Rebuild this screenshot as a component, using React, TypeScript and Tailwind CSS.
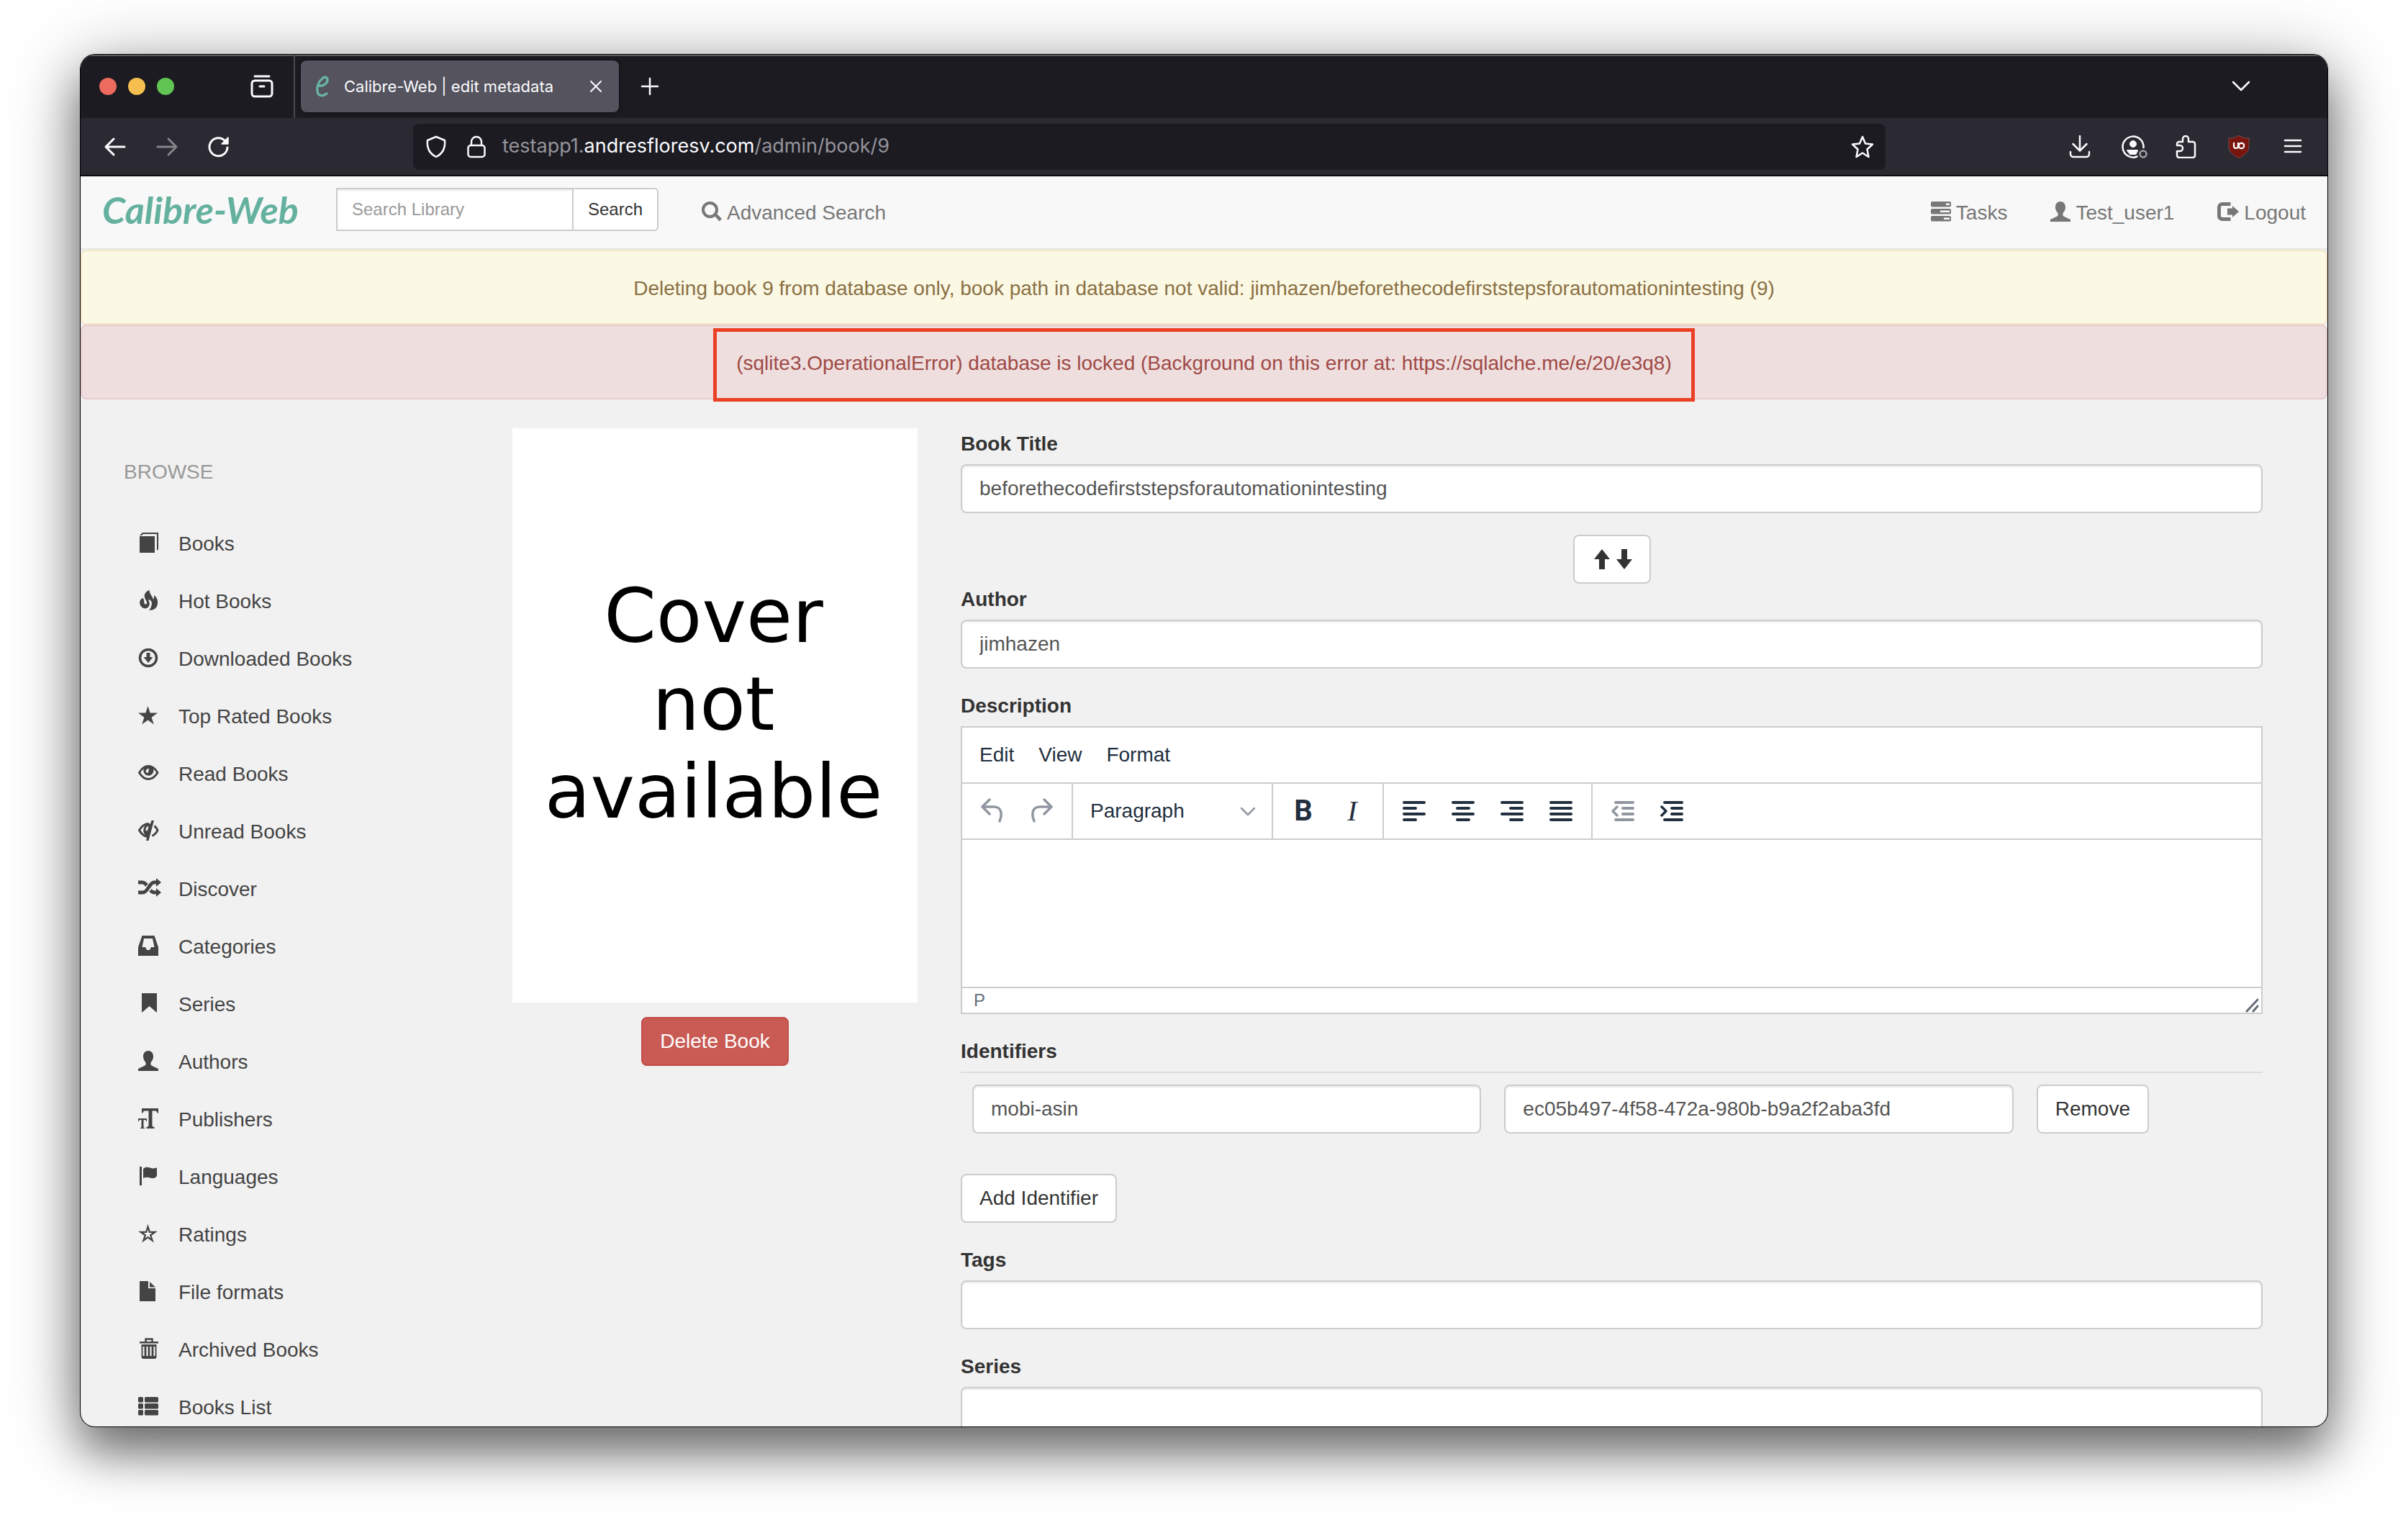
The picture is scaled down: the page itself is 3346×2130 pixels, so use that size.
import React from "react";

type IconProps = { children: React.ReactNode; className?: string; box?: string };

function Glyph({ children, className = "size-7", box = "0 0 28 28" }: IconProps) {
  return (
    <svg viewBox={box} className={className} fill="currentColor" aria-hidden="true">
      {children}
    </svg>
  );
}

function Line({ children, className = "size-8", box = "0 0 32 32" }: IconProps) {
  return (
    <svg
      viewBox={box}
      className={className}
      fill="none"
      stroke="currentColor"
      strokeWidth="2.5"
      strokeLinecap="round"
      strokeLinejoin="round"
      aria-hidden="true"
    >
      {children}
    </svg>
  );
}

const USER =
  "M14 0c-4 0-7 3-7 7.500 0 4.500 2 6.500 3.500 9 .5 2 0 3.500-2 4.500L0 25v3h28v-3l-8.500-4c-2-1-2.500-2.500-2-4.500 1.500-2.500 3.500-4.500 3.500-9C21 3 18 0 14 0z";
const STAR = "M13.500 1l3.100 9.600H27l-8.400 6.100 3.200 9.800-8.300-6-8.300 6 3.200-9.800L0 10.600h10.400z";

const menu: { label: string; icon: React.ReactNode }[] = [
  {
    label: "Books",
    icon: (
      <>
        <path d="M2 5h21v23H2z" />
        <path d="M2 4 6 0h22v23l-2 2V2H7L5 4z" />
      </>
    ),
  },
  {
    label: "Hot Books",
    icon: (
      <path d="M15.500 0C10 2 8 6 9 10c1 4 3.500 5 3 8-.5 2-3 2-3.500 0-.6-2 .5-4-2-7C3 12 1.500 16 2.500 19.500 4 25 10 27 13.500 24c3.500-3 2.500-7 .5-11 3 0 6 3 4.500 8-.5 3-2 5-3.500 7 7 0 11-3 12-9 .8-6-2-10-5-12 .2 3 0 5-1 6-1-5-5-7-5.500-13z" />
    ),
  },
  {
    label: "Downloaded Books",
    icon: (
      <>
        <circle cx="14" cy="14" r="11.500" fill="none" stroke="currentColor" strokeWidth="3.500" />
        <path d="M11.500 7h5v6h4L14 21l-6.500-8h4z" />
      </>
    ),
  },
  { label: "Top Rated Books", icon: <path d={STAR} /> },
  {
    label: "Read Books",
    icon: (
      <>
        <path
          d="M1.500 13.500C5 7.500 9 4.500 14 4.500s9.500 3 13 9c-3.500 6-8 9-13 9s-9-3-12.500-9z"
          fill="none"
          stroke="currentColor"
          strokeWidth="2.800"
        />
        <path d="M7.500 12a7 7 0 0 1 2-6.500h9.500a7 7 0 1 1-11.500 6.500zm3-.5c.5 2 2.500 3 3.500 2 1-1 0-2 .5-3.500.3-1 1-1.500.5-2-2-.5-4.500 1.500-4.500 3.500z" fillRule="evenodd" />
      </>
    ),
  },
  {
    label: "Unread Books",
    icon: (
      <>
        <path
          d="M15 4.500c-5 0-10 3-13.500 9 3 5.500 7 8.500 11.500 9M22.500 7.500c2 1.500 3.500 3.500 4.500 6-1.500 3.500-4 6-7.500 8"
          fill="none"
          stroke="currentColor"
          strokeWidth="3"
        />
        <path d="M18.500 0H22l-7.500 28H11l1.500-6c-4-2-6-6-5-10 .5-3 2-5 4-7l5.500-.5z" />
        <path d="M10.500 12c.5-2.500 2-4 4-4l-1.500 6c-1.500 1-2.500 0-2.500-2z" fill="#f1f1f1" />
      </>
    ),
  },
  {
    label: "Discover",
    icon: (
      <>
        <path
          d="M0 6h6c3 0 4 2 6 4M0 20h7c6 0 9-14 15-14h4M17 17c2 2 3 3 5 3h4"
          fill="none"
          stroke="currentColor"
          strokeWidth="5"
        />
        <path d="M25 0l7 6-7 6zM25 14l7 6-7 6z" />
      </>
    ),
  },
  {
    label: "Categories",
    icon: (
      <path
        d="M5.500 0h17L28 16v12H0V16zM8 4 5.500 16H10l2 4h4l2-4h4.500L20 4z"
        fillRule="evenodd"
      />
    ),
  },
  { label: "Series", icon: <path d="M5 0h21v27L15.500 18 5 27z" /> },
  { label: "Authors", icon: <path d={USER} /> },
  {
    label: "Publishers",
    icon: (
      <path d="M5 0h23v6.500h-1.500C26 4 25 3.500 23 3.500h-3.500v20c0 1.500 1 2.500 3 2.500v2H11.500v-2c2 0 3-1 3-2.500v-20H10c-2 0-3 .5-3.500 3H5zM0 14h12v4h-1c0-1.500-.5-2-2-2H7.500v9.500c0 1 .5 1.500 1.500 1.500v1H3v-1c1 0 1.500-.5 1.500-1.500V16H3c-1.500 0-2 .5-2 2H0z" />
    ),
  },
  {
    label: "Languages",
    icon: (
      <path d="M2 1h3v26H2zM7 4c3-3 6-2.500 9.500-1.500S23 4 26 2v12c-3 3.500-6 3.500-9.500 2.500S10 15.500 7 17z" />
    ),
  },
  {
    label: "Ratings",
    icon: (
      <path
        d="M13.500 4.500l2.300 7.300h7.600l-6.200 4.500 2.400 7.200-6.100-4.400-6.100 4.400 2.400-7.200-6.200-4.500h7.600z"
        fill="none"
        stroke="currentColor"
        strokeWidth="2.300"
      />
    ),
  },
  { label: "File formats", icon: <path d="M2 0h12v10h10v18H2zM16 1l8 7.500h-8z" /> },
  {
    label: "Archived Books",
    icon: (
      <>
        <path d="M2 4h26v2.500H2zM4.500 8h21v17a3 3 0 0 1-3 3h-15a3 3 0 0 1-3-3z" />
        <path d="M10.500 4V.5h9V4" fill="none" stroke="currentColor" strokeWidth="2.500" />
        <path d="M7.500 11v13M12.500 11v13M17.500 11v13M22.500 11v13" stroke="#f1f1f1" strokeWidth="2.200" />
      </>
    ),
  },
  {
    label: "Books List",
    icon: (
      <>
        {[1, 10, 19].map((y) => (
          <React.Fragment key={y}>
            <rect x="0" y={y} width="7" height="7.500" rx="1.500" />
            <rect x="9" y={y} width="19" height="7.500" rx="1.500" />
          </React.Fragment>
        ))}
      </>
    ),
  },
];

const inputClass =
  "h-[68px] w-full min-w-0 rounded-lg border-2 border-[#ccc] bg-white px-6 text-[28px] text-[#555] shadow-[inset_0_2px_2px_rgba(0,0,0,0.075)]";
const buttonClass =
  "h-[68px] shrink-0 rounded-lg border-2 border-[#ccc] bg-white px-6 text-[28px] text-[#333]";
const labelClass = "block text-[28px] leading-11 font-bold text-[#333]";

function Field({ id, label, value = "" }: { id: string; label: string; value?: string }) {
  return (
    <div className="flex flex-col gap-[6px]">
      <label htmlFor={id} className={labelClass}>
        {label}
      </label>
      <input id={id} type="text" defaultValue={value} className={inputClass} />
    </div>
  );
}

function TitleBar() {
  return (
    <div className="flex h-[88px] shrink-0 items-center bg-[#1c1b22] text-[#fbfbfe] shadow-[inset_0_2px_0_#5c5c5e]">
      <div className="flex h-full w-[298px] shrink-0 items-center border-r-2 border-[#4b4a54] pl-[26px]">
        <div className="flex gap-4">
          <button aria-label="Close window" className="size-6 rounded-full bg-[#ed6a5e]" />
          <button aria-label="Minimize window" className="size-6 rounded-full bg-[#f5bf4f]" />
          <button aria-label="Zoom window" className="size-6 rounded-full bg-[#61c554]" />
        </div>
        <button aria-label="Firefox View" className="ml-[104px]">
          <Line className="h-9 w-9" box="0 0 36 36">
            <path d="M8 4h20" strokeWidth="3" />
            <rect x="4" y="10" width="28" height="22" rx="4" strokeWidth="3" />
            <path d="M15 18h6" strokeWidth="3" />
          </Line>
        </button>
      </div>
      <div className="ml-2 flex h-[72px] w-[442px] items-center rounded-lg bg-[#55535e] pr-[18px] pl-5 shadow-[0_0_4px_rgba(0,0,0,0.6)]">
        <Line className="h-8 w-5 text-[#68b39f]" box="0 0 20 32">
          <path d="M5 15c6 1 12-3 12-8 0-4-4-5-7-2C5 9 2 16 3 23c1 7 8 7 13 3" strokeWidth="3.500" />
        </Line>
        <span className="ml-5 flex-1 font-[Inter,sans-serif] text-[22px] whitespace-nowrap">Calibre-Web | edit metadata</span>
        <button aria-label="Close tab">
          <Line className="size-7" box="0 0 28 28">
            <path d="M7 7l14 14M21 7l-14 14" strokeWidth="2" />
          </Line>
        </button>
      </div>
      <button aria-label="New tab" className="ml-[27px]">
        <Line>
          <path d="M16 5v22M5 16h22" />
        </Line>
      </button>
      <button aria-label="List all tabs" className="mr-[104px] ml-auto">
        <Line>
          <path d="M5 10l11 11 11-11" />
        </Line>
      </button>
    </div>
  );
}

function ToolBar() {
  return (
    <div className="flex h-[81px] shrink-0 items-center border-b-2 border-[#0c0c0d] bg-[#2b2a33] text-[#fbfbfe]">
      <div className="flex w-[462px] shrink-0 items-center gap-10 pl-8">
        <button aria-label="Back">
          <Line>
            <path d="M14 5L3 16l11 11M3 16h26" strokeWidth="3" />
          </Line>
        </button>
        <button aria-label="Forward" disabled className="text-[#85848a]">
          <Line>
            <path d="M18 5l11 11-11 11M29 16H3" strokeWidth="3" />
          </Line>
        </button>
        <button aria-label="Reload">
          <Line>
            <path d="M28 17a12.500 12.500 0 1 1-3.500-9.500" strokeWidth="3" />
            <path d="M29 3v9h-9z" fill="currentColor" strokeWidth="1.500" />
          </Line>
        </button>
      </div>
      <div className="flex h-16 flex-1 items-center rounded-lg bg-[#1c1b22] px-4">
        <Line>
          <path d="M16 2l12 5c1 10-2 18-12 23C6 25 3 17 4 7z" />
        </Line>
        <Line className="ml-6 size-8">
          <rect x="4.500" y="14" width="23" height="16" rx="3.500" />
          <path d="M9 14V9a7 7 0 0 1 14 0v5" />
        </Line>
        <span className="ml-5 flex-1 font-[Inter,sans-serif] text-[27px] whitespace-nowrap text-[#95949b]">
          testapp1.<span className="text-[#fbfbfe]">andresfloresv.com</span>/admin/book/9
        </span>
        <button aria-label="Bookmark this page">
          <Line>
            <path d="M16 2l4 9.500 10 1-7.500 7 2 10.500L16 24.500 7.500 30l2-10.500-7.500-7 10-1z" />
          </Line>
        </button>
      </div>
      <div className="flex w-[614px] shrink-0 items-center justify-end gap-[42px] pr-8">
        <button aria-label="Downloads">
          <Line>
            <path d="M16 1v20M6.500 12l9.500 9.500 9.500-9.500M3 23v3a4 4 0 0 0 4 4h18a4 4 0 0 0 4-4v-3" />
          </Line>
        </button>
        <button aria-label="Account">
          <Line className="size-8 overflow-visible">
            <path d="M30.500 17a14.500 14.500 0 1 0-9 12.500" />
            <circle cx="16" cy="12" r="4.500" fill="currentColor" strokeWidth="1" />
            <path d="M8 21h14l-2.500 5H12z" fill="currentColor" strokeWidth="2" />
            <circle cx="30" cy="26" r="4.500" stroke="#a3a2a8" />
          </Line>
        </button>
        <button aria-label="Extensions">
          <Line>
            <path d="M11 9V5a4 4 0 0 1 8 0v4h6a3 3 0 0 1 3 3v16a3 3 0 0 1-3 3H6a3 3 0 0 1-3-3v-6h4a4 4 0 0 0 0-8H3v-2a3 3 0 0 1 3-3z" />
          </Line>
        </button>
        <button aria-label="uBlock Origin">
          <svg viewBox="0 0 32 32" className="size-8" aria-hidden="true">
            <path
              d="M15 0c4 3 9 4 14 4v12c0 8-8 12-14 16C9 28 1 24 1 16V4c5 0 10-1 14-4z"
              fill="#79150f"
              stroke="#8b6a6b"
              strokeWidth=".6"
            />
            <path d="M8 10v5a3 3 0 0 0 6 0v-5" fill="none" stroke="#fff" strokeWidth="2.200" />
            <circle cx="18.500" cy="14.500" r="3.700" fill="none" stroke="#fff" strokeWidth="2.200" />
          </svg>
        </button>
        <button aria-label="Open application menu">
          <Line>
            <path d="M5 7h22M5 15h22M5 23h22" strokeWidth="2.500" />
          </Line>
        </button>
      </div>
    </div>
  );
}

function NavBar() {
  return (
    <nav className="flex h-[102px] shrink-0 items-center border-b-2 border-[#e7e7e7] bg-[#f8f8f8] pr-[30px] pl-[30px] text-[28px] text-[#777]">
      <a href="#home" className="mb-2 w-[325px] shrink-0 font-[Lato,sans-serif] text-[52px] leading-[68px] font-bold text-[#65b19f] italic">
        Calibre-Web
      </a>
      <form className="mb-2 flex" role="search" onSubmit={(e) => e.preventDefault()}>
        <input
          type="text"
          aria-label="Search Library"
          placeholder="Search Library"
          className="h-[60px] w-[330px] border-2 border-[#ccc] bg-white px-5 text-[24px] text-[#555] shadow-[inset_0_2px_2px_rgba(0,0,0,0.075)] placeholder:text-[#999]"
        />
        <button className="h-[60px] rounded-r-md border-2 border-l-0 border-[#ccc] bg-white px-5 text-[24px] text-[#333]">
          Search
        </button>
      </form>
      <a href="#advanced" className="mt-[2px] ml-[60px] flex items-center gap-[7px]">
        <Glyph className="mb-1 size-7">
          <path d="M18 20l3-3 7 7-3.500 3.500z" />
          <circle cx="11.500" cy="11.500" r="9.500" fill="none" stroke="currentColor" strokeWidth="4" />
        </Glyph>
        Advanced Search
      </a>
      <div className="mt-[2px] ml-auto flex gap-[60px]">
        <a href="#tasks" className="flex items-center gap-[7px]">
          <Glyph className="mb-1 size-7">
            {[0, 10, 20].map((y, i) => (
              <React.Fragment key={y}>
                <rect y={y} width="28" height="7.500" rx="2" />
                <rect x={[21, 13, 18][i]} y={y + 2.5} width={[5, 13, 8][i]} height="2.500" fill="#f8f8f8" />
              </React.Fragment>
            ))}
          </Glyph>
          Tasks
        </a>
        <a href="#me" className="flex items-center gap-[7px]">
          <Glyph className="mb-1 size-7">
            <path d={USER} />
          </Glyph>
          Test_user1
        </a>
        <a href="#logout" className="flex items-center gap-[7px]">
          <Glyph className="mb-1 h-7 w-[30px]" box="0 0 30 28">
            <path
              d="M18.500 3.500H7A4.500 4.500 0 0 0 2.500 8v12A4.500 4.500 0 0 0 7 24.500h11.500"
              fill="none"
              stroke="currentColor"
              strokeWidth="5"
            />
            <path d="M14 9.500h7V6l9 8-9 8v-3.500h-7z" />
          </Glyph>
          Logout
        </a>
      </div>
    </nav>
  );
}

const LINES: Record<string, string> = {
  "Align left": "M2 2h28M2 10h16M2 18h28M2 26h16",
  "Align center": "M2 2h28M8 10h16M2 18h28M8 26h16",
  "Align right": "M2 2h28M14 10h16M2 18h28M14 26h16",
  Justify: "M2 2h28M2 10h28M2 18h28M2 26h28",
};
const toolButton = "flex w-[68px] items-center justify-center";
const toolGroup = "flex border-r-2 border-[#ccc] px-2";

function Editor() {
  return (
    <div className="border-2 border-[#ccc] bg-white text-[#222f3e]">
      <div className="flex h-[76px] items-center gap-[34px] px-6 text-[28px]">
        <button>Edit</button>
        <button>View</button>
        <button>Format</button>
      </div>
      <div className="flex h-20 border-y-2 border-[#ccc]">
        <div className={toolGroup}>
          <button aria-label="Undo" disabled className={`${toolButton} text-[#9097a0]`}>
            <Line className="h-9 w-8" box="0 0 32 36">
              <path d="M12 2L2 12l10 10M2 12h16c9 0 13 8 8 20" strokeWidth="3.500" />
            </Line>
          </button>
          <button aria-label="Redo" disabled className={`${toolButton} text-[#9097a0]`}>
            <Line className="h-9 w-8" box="0 0 32 36">
              <path d="M20 2l10 10-10 10M30 12H14C5 12 1 20 6 32" strokeWidth="3.500" />
            </Line>
          </button>
        </div>
        <div className={toolGroup}>
          <div className="relative flex w-[260px]">
            <select aria-label="Block format" className="w-full appearance-none bg-transparent pl-4 text-[28px]">
              <option>Paragraph</option>
            </select>
            <Line className="pointer-events-none absolute top-[27px] right-[13px] size-6 text-[#9097a0]" box="0 0 24 24">
              <path d="M3 7l9 9 9-9" />
            </Line>
          </div>
        </div>
        <div className={toolGroup}>
          <button aria-label="Bold" className={`${toolButton} font-[Roboto,sans-serif] text-[40px] font-bold`}>
            B
          </button>
          <button aria-label="Italic" className={`${toolButton} font-['Liberation_Serif',serif] text-[40px] italic`}>
            I
          </button>
        </div>
        <div className={toolGroup}>
          {Object.entries(LINES).map(([name, d]) => (
            <button key={name} aria-label={name} className={toolButton}>
              <Line className="h-7 w-8" box="0 0 32 28">
                <path d={d} strokeWidth="4" />
              </Line>
            </button>
          ))}
        </div>
        <div className="flex px-2">
          <button aria-label="Decrease indent" disabled className={`${toolButton} text-[#9097a0]`}>
            <Line className="h-7 w-8" box="0 0 32 28">
              <path d="M6 2h24M16 10h14M16 18h14M6 26h24" strokeWidth="4" />
              <path d="M8 8l-6 6 6 6" strokeWidth="3.500" />
            </Line>
          </button>
          <button aria-label="Increase indent" className={toolButton}>
            <Line className="h-7 w-8" box="0 0 32 28">
              <path d="M6 2h24M16 10h14M16 18h14M6 26h24" strokeWidth="4" />
              <path d="M2 8l6 6-6 6" strokeWidth="3.500" />
            </Line>
          </button>
        </div>
      </div>
      <textarea id="description" className="block h-[204px] w-full resize-none p-6 text-[28px] outline-none" />
      <div className="flex h-9 items-center justify-between border-t-2 border-[#ccc] pl-4 text-[24px] leading-none text-[#646d78]">
        <span>P</span>
        <Line className="mr-[2px] size-5 self-end" box="0 0 20 20">
          <path d="M2 18L17 2M11 18l6-7" strokeWidth="3" />
        </Line>
      </div>
    </div>
  );
}

function EditForm() {
  return (
    <form className="flex min-w-0 flex-1 flex-col" onSubmit={(e) => e.preventDefault()}>
      <Field id="title" label="Book Title" value="beforethecodefirststepsforautomationintesting" />
      <button aria-label="Swap title and author" className={`${buttonClass} mt-[30px] flex items-center gap-[6px] self-center`}>
        <Glyph className="h-7 w-7" box="-3 0 28 28">
          <path d="M11 0l11 14h-7v14H7V14H0z" />
        </Glyph>
        <Glyph className="h-7 w-[22px]" box="0 0 22 28">
          <path d="M11 28L0 14h7V0h8v14h7z" />
        </Glyph>
      </button>
      <Field id="author" label="Author" value="jimhazen" />
      <div className="mt-[30px] flex flex-col gap-[6px]">
        <label htmlFor="description" className={labelClass}>
          Description
        </label>
        <Editor />
      </div>
      <fieldset className="mt-[30px]">
        <legend className={labelClass}>Identifiers</legend>
        <div className="mt-[6px] flex gap-8 border-t-2 border-[#ddd] py-4 pr-[158px] pl-4">
          <input aria-label="Identifier type" type="text" defaultValue="mobi-asin" className={inputClass} />
          <input
            aria-label="Identifier value"
            type="text"
            defaultValue="ec05b497-4f58-472a-980b-b9a2f2aba3fd"
            className={inputClass}
          />
          <button className={buttonClass}>Remove</button>
        </div>
      </fieldset>
      <button className={`${buttonClass} mt-10 mb-[30px] self-start`}>Add Identifier</button>
      <div className="flex flex-col gap-[30px]">
        <Field id="tags" label="Tags" />
        <Field id="series" label="Series" />
      </div>
    </form>
  );
}

export default function App() {
  return (
    <div className="h-screen bg-white px-28 pt-19 pb-37 font-['Liberation_Sans',sans-serif]">
      <div className="flex h-full flex-col overflow-hidden rounded-[20px] bg-[#f1f1f1] shadow-[0_0_0_1px_#000,0_36px_60px_rgba(0,0,0,0.4),0_16px_100px_rgba(0,0,0,0.4)]">
        <TitleBar />
        <ToolBar />
        <NavBar />
        <div role="alert" className="shrink-0 rounded-lg border-2 border-[#f5e8ca] bg-[#fbf8e4] pt-8 pb-7 text-center text-[28px] leading-10 text-[#8a7044]">
          Deleting book 9 from database only, book path in database not valid: jimhazen/beforethecodefirststepsforautomationintesting (9)
        </div>
        <div role="alert" className="shrink-0 rounded-lg border-2 border-[#e6cbd0] bg-[#eedede] pt-8 pb-7 text-center text-[28px] leading-10 text-[#9f4a46]">
          <span className="relative inline-block">
            (sqlite3.OperationalError) database is locked (Background on this error at: https://sqlalche.me/e/20/e3q8)
            <span className="absolute -inset-x-8 -top-[29px] -bottom-[33px] border-5 border-[#eb4026]" />
          </span>
        </div>
        <div className="flex min-h-0 flex-1 gap-[60px] overflow-hidden pt-10 pr-[90px]">
          <aside className="w-[540px] shrink-0 pt-[41px] pl-[60px] text-[28px] leading-10">
            <h2 className="text-[#999]">BROWSE</h2>
            <ul className="mt-10 text-[#444]">
              {menu.map(({ label, icon }) => (
                <li key={label}>
                  <a href="#list" className="flex h-20 items-center gap-7 pl-5">
                    <Glyph className="mb-1 size-7 overflow-visible">{icon}</Glyph>
                    {label}
                  </a>
                </li>
              ))}
            </ul>
          </aside>
          <section className="flex w-[563px] shrink-0 flex-col items-center gap-5">
            <div className="h-[798px] w-full bg-white pt-[200px] pr-1 text-center font-['DejaVu_Sans',sans-serif] text-[104px] leading-[122px] text-black">
              Cover
              <br />
              not
              <br />
              available
            </div>
            <button className="h-[68px] rounded-lg border-2 border-[#c14d46] bg-[#c95b54] px-6 text-[28px] text-white">
              Delete Book
            </button>
          </section>
          <EditForm />
        </div>
      </div>
    </div>
  );
}
